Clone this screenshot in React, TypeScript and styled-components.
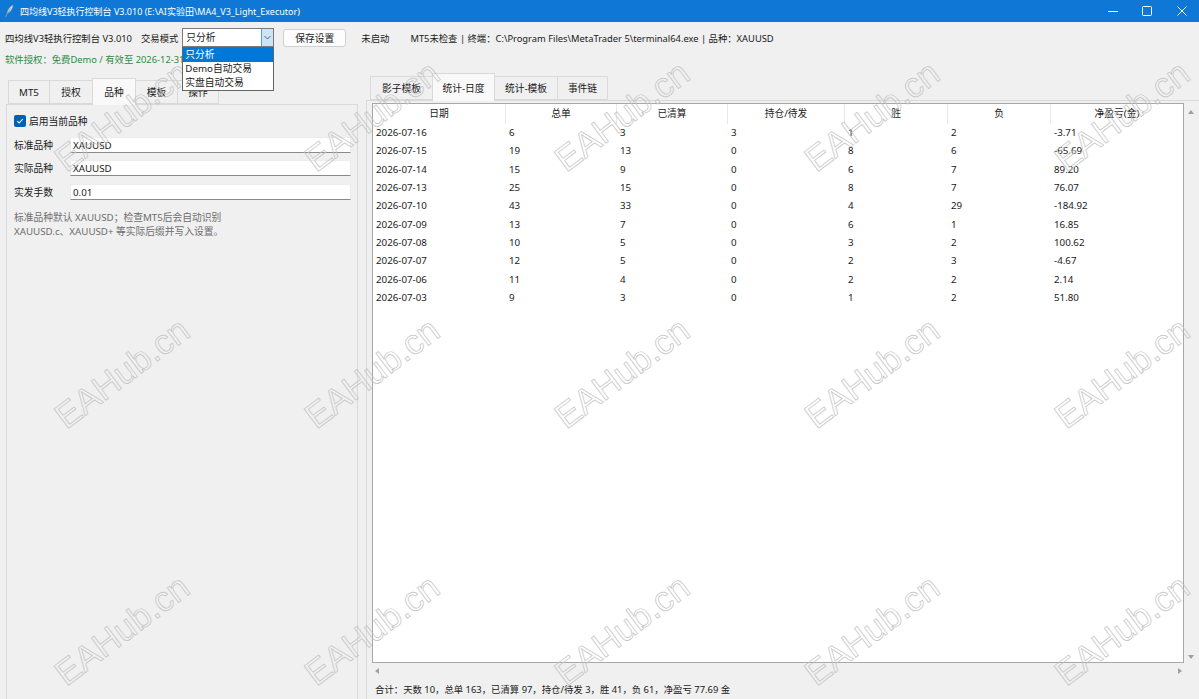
import React from "react";
import styled, { createGlobalStyle } from "styled-components";

const FONT = `"Noto Sans", "Noto Sans CJK SC", sans-serif`;

const GlobalStyle = createGlobalStyle`
	html, body {
		margin: 0;
		padding: 0;
		background: #f0f0f0;
	}
	body {
		font-family: ${FONT};
		font-size: 9.75px;
		color: #1a1a1a;
	}
	* {
		box-sizing: border-box;
	}
`;

const Window = styled.div`
	position: relative;
	width: 1199px;
	height: 699px;
	overflow: hidden;
	display: flex;
	flex-direction: column;
	background: #f0f0f0;
`;

const TitleBar = styled.div`
	flex: none;
	height: 22px;
	display: flex;
	align-items: center;
	padding-left: 4px;
	background: #0f78d6;
	color: #fff;
`;

const TitleText = styled.span`
	margin-left: 6px;
	font-size: 9px;
	white-space: nowrap;
`;

const WinControls = styled.div`
	margin-left: auto;
	display: flex;
	height: 100%;
`;

const WinButton = styled.div`
	width: 34.5px;
	display: flex;
	align-items: center;
	justify-content: center;
`;

const Toolbar = styled.div`
	flex: none;
	height: 19px;
	margin-top: 6px;
	padding-left: 5px;
	display: flex;
	align-items: center;
	font-size: 9.35px;
`;

const ToolText = styled.span<{ $ml?: number }>`
	margin-left: ${(p) => p.$ml ?? 0}px;
	white-space: nowrap;
`;

const ComboWrap = styled.div`
	position: relative;
	width: 92px;
	height: 19px;
	margin-left: 4px;
	z-index: 20;
	font-size: 9.75px;
`;

const ComboBox = styled.div`
	height: 100%;
	display: flex;
	background: #fff;
	border: 1px solid #7a7a7a;
`;

const ComboValue = styled.div`
	flex: 1;
	padding-left: 3px;
	line-height: 17px;
`;

const ComboArrow = styled.div`
	width: 12px;
	display: flex;
	align-items: center;
	justify-content: center;
	background: #cce4f7;
	border-left: 1px solid #569de5;
`;

const DropList = styled.div`
	position: absolute;
	left: 0;
	top: 19px;
	width: 92px;
	background: #fff;
	border: 1px solid #646464;
`;

const DropItem = styled.div<{ $active?: boolean }>`
	height: 14px;
	line-height: 14px;
	padding-left: 2px;
	white-space: nowrap;
	background: ${(p) => (p.$active ? "#0078d7" : "transparent")};
	color: ${(p) => (p.$active ? "#fff" : "#1a1a1a")};
`;

const Button = styled.button`
	margin-left: 9px;
	width: 63px;
	height: 18px;
	padding: 0;
	background: #fdfdfd;
	border: 1px solid #d0d0d0;
	border-radius: 3px;
	font: inherit;
	font-size: 9.75px;
	color: #1a1a1a;
`;

const LicenseLine = styled.div`
	flex: none;
	height: 14px;
	margin-top: 6px;
	padding-left: 5px;
	line-height: 14px;
	font-size: 9.35px;
	color: #2e8b3e;
	white-space: nowrap;
`;

const Body = styled.div`
	flex: 1;
	min-height: 0;
	display: flex;
`;

const LeftColumn = styled.div`
	flex: none;
	width: 358px;
	padding: 11px 0 0 6px;
	display: flex;
	flex-direction: column;
`;

const RightColumn = styled.div`
	flex: 1;
	min-width: 0;
	margin-left: 8px;
	padding-top: 6px;
	display: flex;
	flex-direction: column;
`;

const TabBar = styled.div<{ $indent: number }>`
	flex: none;
	display: flex;
	align-items: flex-end;
	padding-left: ${(p) => p.$indent + 1}px;
`;

const Tab = styled.div<{ $active?: boolean; $w: number; $h: number }>`
	position: relative;
	z-index: ${(p) => (p.$active ? 1 : 0)};
	width: ${(p) => p.$w}px;
	height: ${(p) => p.$h}px;
	margin-left: -1px;
	margin-bottom: ${(p) => (p.$active ? -1 : 0)}px;
	display: flex;
	align-items: center;
	justify-content: center;
	border: 1px solid #d9d9d9;
	border-bottom: ${(p) => (p.$active ? "none" : "1px solid #d9d9d9")};
	background: ${(p) => (p.$active ? "#f9f9f9" : "#f0f0f0")};
	white-space: nowrap;
`;

const Pane = styled.div`
	flex: 1;
	min-height: 0;
	border: 1px solid #d9d9d9;
	border-bottom: none;
	background: #f0f0f0;
`;

const LeftPane = styled(Pane)`
	padding: 9px 6px 0 7px;
`;

const RightPane = styled(Pane)`
	padding: 2px 0 0 5px;
	border-right: none;
`;

const CheckRow = styled.label`
	height: 14px;
	display: flex;
	align-items: center;
	gap: 3px;
`;

const CheckBox = styled.span`
	width: 12px;
	height: 12px;
	display: flex;
	align-items: center;
	justify-content: center;
	background: #005fb8;
	border-radius: 2px;
`;

const FormRow = styled.div<{ $mt: number }>`
	height: 16px;
	margin-top: ${(p) => p.$mt}px;
	display: flex;
	align-items: center;
`;

const FieldLabel = styled.span`
	width: 56px;
	flex: none;
	white-space: nowrap;
`;

const Entry = styled.div`
	flex: 1;
	height: 16px;
	padding-left: 2px;
	line-height: 15px;
	background: #fff;
	border: 1px solid #ececec;
	border-bottom: 1px solid #8a8a8a;
`;

const HelpText = styled.div`
	margin-top: 11px;
	line-height: 14px;
	color: #6e6e6e;
`;

const TreeGrid = styled.div`
	height: 575px;
	display: grid;
	grid-template-columns: 812px 14px;
	grid-template-rows: 560px 15px;
`;

const TreeBox = styled.div`
	background: #fff;
	border: 1px solid #a8a8a8;
	overflow: hidden;
`;

const COLS = "133px 111px 111px 117px 103px 103px 1fr";

const HeaderRow = styled.div`
	height: 20px;
	display: grid;
	grid-template-columns: ${COLS};
`;

const HeaderCell = styled.div`
	line-height: 20px;
	text-align: center;
	color: #222;
	border-right: 1px solid #e8e8e8;
	white-space: nowrap;
	&:last-child {
		border-right: none;
	}
`;

const DataRow = styled.div`
	height: 18.35px;
	display: grid;
	grid-template-columns: ${COLS};
`;

const DataCell = styled.div`
	padding-left: 3px;
	line-height: 18.35px;
	white-space: nowrap;
`;

const ScrollV = styled.div`
	display: flex;
	flex-direction: column;
	align-items: center;
	justify-content: space-between;
	padding: 7px 0 4px 0;
`;

const ScrollH = styled.div`
	display: flex;
	align-items: center;
	justify-content: space-between;
	padding: 0 2px 0 3px;
`;

const Arrow = styled.span<{ $dir: "up" | "down" | "left" | "right" }>`
	width: 0;
	height: 0;
	border-style: solid;
	border-color: transparent;
	${(p) =>
		p.$dir === "up"
			? "border-width: 0 3.5px 4px 3.5px; border-bottom-color: #a0a0a0;"
			: p.$dir === "down"
			? "border-width: 4px 3.5px 0 3.5px; border-top-color: #a0a0a0;"
			: p.$dir === "left"
			? "border-width: 3.5px 4px 3.5px 0; border-right-color: #a0a0a0;"
			: "border-width: 3.5px 0 3.5px 4px; border-left-color: #a0a0a0;"}
`;

const Summary = styled.div`
	margin-top: 5px;
	padding-left: 3px;
	line-height: 14px;
	font-size: 9.4px;
	white-space: nowrap;
`;

const WatermarkLayer = styled.div`
	position: absolute;
	inset: 0;
	pointer-events: none;
	z-index: 10;
`;

const Mark = styled.span`
	position: absolute;
	transform: translate(-50%, -50%) rotate(-37deg);
	font-family: "Liberation Sans", Arial, sans-serif;
	font-size: 35px;
	color: transparent;
	-webkit-text-stroke: 0.7px #c2c2c2;
	white-space: nowrap;
`;

const rows = [
	["2026-07-16", "6", "3", "3", "1", "2", "-3.71"],
	["2026-07-15", "19", "13", "0", "8", "6", "-65.69"],
	["2026-07-14", "15", "9", "0", "6", "7", "89.20"],
	["2026-07-13", "25", "15", "0", "8", "7", "76.07"],
	["2026-07-10", "43", "33", "0", "4", "29", "-184.92"],
	["2026-07-09", "13", "7", "0", "6", "1", "16.85"],
	["2026-07-08", "10", "5", "0", "3", "2", "100.62"],
	["2026-07-07", "12", "5", "0", "2", "3", "-4.67"],
	["2026-07-06", "11", "4", "0", "2", "2", "2.14"],
	["2026-07-03", "9", "3", "0", "1", "2", "51.80"],
];

const headers = ["日期", "总单", "已清算", "持仓/待发", "胜", "负", "净盈亏(金)"];

const leftTabs: [string, number][] = [
	["MT5", 42],
	["授权", 44],
	["品种", 44],
	["模板", 43],
	["操作", 42],
];

const rightTabs: [string, number][] = [
	["影子模板", 63],
	["统计-日度", 63],
	["统计-模板", 64],
	["事件链", 51],
];

function Feather() {
	return (
		<svg width="10" height="14" viewBox="0 0 10 14">
			<path d="M1.5 13 L3 9.5 C3.5 6 6 2.5 9 1 C8.8 4.5 6.5 8 3.4 9.6 Z" fill="#dfe8f0" stroke="#8aa0b4" strokeWidth="0.6" />
			<path d="M1.2 13.3 L6.5 4.5" stroke="#6f8599" strokeWidth="0.7" />
		</svg>
	);
}

export default function App() {
	const marks: { x: number; y: number }[] = [];
	for (let j = 0; j < 3; j++) {
		for (let k = 0; k < 5; k++) {
			marks.push({ x: 122 + 250 * k, y: 116 + 257 * j });
		}
	}

	return (
		<>
			<GlobalStyle />
			<Window>
				<TitleBar>
					<Feather />
					<TitleText>{"四均线V3轻执行控制台 V3.010 (E:\\AI实验田\\MA4_V3_Light_Executor)"}</TitleText>
					<WinControls>
						<WinButton>
							<svg width="10" height="10" viewBox="0 0 10 10">
								<path d="M0 5.5 H10" stroke="#fff" strokeWidth="1" />
							</svg>
						</WinButton>
						<WinButton>
							<svg width="10" height="10" viewBox="0 0 10 10">
								<rect x="0.5" y="0.5" width="9" height="9" rx="1" fill="none" stroke="#fff" strokeWidth="1" />
							</svg>
						</WinButton>
						<WinButton>
							<svg width="10" height="10" viewBox="0 0 10 10">
								<path d="M0.5 0.5 L9.5 9.5 M9.5 0.5 L0.5 9.5" stroke="#fff" strokeWidth="1" />
							</svg>
						</WinButton>
					</WinControls>
				</TitleBar>

				<Toolbar>
					<ToolText>四均线V3轻执行控制台 V3.010</ToolText>
					<ToolText $ml={9}>交易模式</ToolText>
					<ComboWrap>
						<ComboBox>
							<ComboValue>只分析</ComboValue>
							<ComboArrow>
								<svg width="7" height="5" viewBox="0 0 7 5">
									<path d="M0.5 1 L3.5 4 L6.5 1" fill="none" stroke="#555" strokeWidth="0.9" />
								</svg>
							</ComboArrow>
						</ComboBox>
						<DropList>
							<DropItem $active>只分析</DropItem>
							<DropItem>Demo自动交易</DropItem>
							<DropItem>实盘自动交易</DropItem>
						</DropList>
					</ComboWrap>
					<Button>保存设置</Button>
					<ToolText $ml={15}>未启动</ToolText>
					<ToolText $ml={21}>{"MT5未检查 | 终端：C:\\Program Files\\MetaTrader 5\\terminal64.exe | 品种：XAUUSD"}</ToolText>
				</Toolbar>

				<LicenseLine>软件授权：免费Demo / 有效至 2026-12-31</LicenseLine>

				<Body>
					<LeftColumn>
						<TabBar $indent={2}>
							{leftTabs.map(([name, w]) => (
								<Tab key={name} $w={w} $h={name === "品种" ? 27 : 24} $active={name === "品种"}>
									{name}
								</Tab>
							))}
						</TabBar>
						<LeftPane>
							<CheckRow>
								<CheckBox>
									<svg width="8" height="8" viewBox="0 0 8 8">
										<path d="M1.3 4.2 L3.2 6 L6.8 2" fill="none" stroke="#fff" strokeWidth="1.1" />
									</svg>
								</CheckBox>
								启用当前品种
							</CheckRow>
							<FormRow $mt={9}>
								<FieldLabel>标准品种</FieldLabel>
								<Entry>XAUUSD</Entry>
							</FormRow>
							<FormRow $mt={7}>
								<FieldLabel>实际品种</FieldLabel>
								<Entry>XAUUSD</Entry>
							</FormRow>
							<FormRow $mt={8}>
								<FieldLabel>实发手数</FieldLabel>
								<Entry>0.01</Entry>
							</FormRow>
							<HelpText>
								标准品种默认 XAUUSD；检查MT5后会自动识别
								<br />
								XAUUSD.c、XAUUSD+ 等实际后缀并写入设置。
							</HelpText>
						</LeftPane>
					</LeftColumn>

					<RightColumn>
						<TabBar $indent={4}>
							{rightTabs.map(([name, w]) => (
								<Tab key={name} $w={w} $h={name === "统计-日度" ? 28 : 24} $active={name === "统计-日度"}>
									{name}
								</Tab>
							))}
						</TabBar>
						<RightPane>
							<TreeGrid>
								<TreeBox>
									<HeaderRow>
										{headers.map((h) => (
											<HeaderCell key={h}>{h}</HeaderCell>
										))}
									</HeaderRow>
									{rows.map((r) => (
										<DataRow key={r[0]}>
											{r.map((c, i) => (
												<DataCell key={i}>{c}</DataCell>
											))}
										</DataRow>
									))}
								</TreeBox>
								<ScrollV>
									<Arrow $dir="up" />
									<Arrow $dir="down" />
								</ScrollV>
								<ScrollH>
									<Arrow $dir="left" />
									<Arrow $dir="right" />
								</ScrollH>
							</TreeGrid>
							<Summary>合计：天数 10，总单 163，已清算 97，持仓/待发 3，胜 41，负 61，净盈亏 77.69 金</Summary>
						</RightPane>
					</RightColumn>
				</Body>

				<WatermarkLayer>
					{marks.map((m, i) => (
						<Mark key={i} style={{ left: m.x, top: m.y }}>
							EAHub.cn
						</Mark>
					))}
				</WatermarkLayer>
			</Window>
		</>
	);
}
